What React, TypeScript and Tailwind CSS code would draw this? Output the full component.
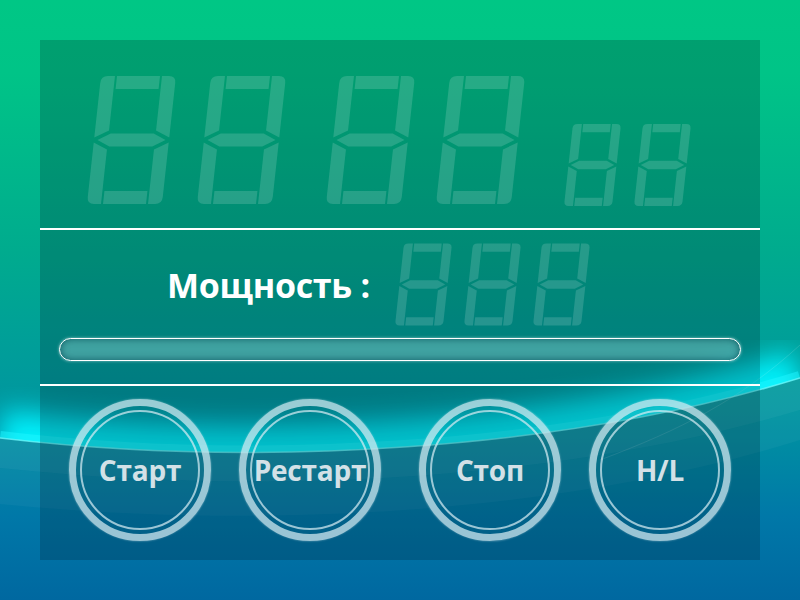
import React from "react";

const SEGMENTS = [
  "M0,7 Q0,0 7,0 L14,0 L14,54.5 L0,61.5 Z",
  "M61,0 L68,0 Q75,0 75,7 L75,61.5 L61,54.5 Z",
  "M0,66.5 L14,73.5 L14,128 L7,128 Q0,128 0,121 Z",
  "M75,66.5 L75,121 Q75,128 68,128 L61,128 L61,73.5 Z",
  "M16,0 L59,0 L59,13 L16,13 Z",
  "M16,115 L59,115 L59,128 L16,128 Z",
  "M3.5,64 L16,57.5 L59,57.5 L71.5,64 L59,70.5 L16,70.5 Z",
];

function Digit({ w, h }: { w: number; h: number }) {
  return (
    <svg width={w} height={h} viewBox="0 0 89 128" className="shrink-0">
      <g transform="translate(14 0) skewX(-6.24)" fill="#ffffff" fillOpacity={0.15}>
        {SEGMENTS.map((d, i) => (
          <path key={i} d={d} />
        ))}
      </g>
    </svg>
  );
}

function Wave() {
  const c1 = "M0,438 C250,468 560,452 800,378";
  return (
    <svg className="absolute inset-0" width={800} height={600} viewBox="0 0 800 600">
      <defs>
        <clipPath id="above">
          <path d={`${c1} L800,0 L0,0 Z`} />
        </clipPath>
        <filter id="blur" x="-20%" y="-50%" width="140%" height="200%">
          <feGaussianBlur stdDeviation="13" />
        </filter>
      </defs>
      <path d={`${c1} L800,410 C560,482 260,496 0,468 Z`} fill="#ffffff" fillOpacity={0.07} />
      <path d="M0,468 C260,496 560,482 800,410 L800,440 C560,515 260,530 0,504 Z" fill="#ffffff" fillOpacity={0.035} />
      <g clipPath="url(#above)">
        <path d={c1} stroke="#00f4ff" strokeWidth={56} fill="none" opacity={0.95} filter="url(#blur)" />
        <path d={c1} stroke="#20f6ff" strokeWidth={14} fill="none" opacity={0.5} />
      </g>
      <path d={c1} stroke="#6ff8fb" strokeWidth={1.5} fill="none" opacity={0.75} />
      <path d="M600,460 C680,430 740,400 800,345" stroke="#ffffff" strokeWidth={1} fill="none" opacity={0.12} />
    </svg>
  );
}

function RoundButton({ label, className }: { label: string; className?: string }) {
  return (
    <div
      className={`relative flex h-[142px] w-[142px] shrink-0 items-center justify-center rounded-full border-[7px] border-[rgba(214,236,242,0.72)] shadow-[0_0_2px_rgba(214,236,242,0.6)] ${className ?? ""}`}
    >
      <div className="absolute inset-[4px] rounded-full border-2 border-[rgba(214,236,242,0.72)]" />
      <span className="relative text-[28px] font-bold leading-none tracking-[-0.2px] text-[#d3e1e7] [font-family:'Open_Sans',sans-serif]">
        {label}
      </span>
    </div>
  );
}

export default function App() {
  return (
    <div className="relative h-[600px] w-[800px] overflow-hidden bg-[linear-gradient(180deg,#00c785_0%,#00c487_12%,#00ab8e_42%,#0096a0_68%,#0078a8_86%,#0068a0_100%)]">
      <Wave />
      <div className="relative p-[40px]">
        <div className="flex h-[520px] w-[720px] flex-col bg-[rgba(0,20,30,0.21)]">
          <div className="flex h-[188px] items-end pb-[24px] pl-[47px]">
            <Digit w={89} h={128} />
            <div className="ml-[21px]">
              <Digit w={89} h={128} />
            </div>
            <div className="ml-[40px]">
              <Digit w={89} h={128} />
            </div>
            <div className="ml-[21px]">
              <Digit w={89} h={128} />
            </div>
            <div className="ml-[39px] mb-[-2px]">
              <Digit w={57} h={82} />
            </div>
            <div className="ml-[13px] mb-[-2px]">
              <Digit w={57} h={82} />
            </div>
          </div>
          <div className="h-[2px] bg-white" />
          <div className="flex h-[154px] flex-col">
            <div className="flex items-center pl-[127px] pt-[13px]">
              <span className="w-[228px] text-[34px] font-bold leading-none tracking-[-0.3px] text-white [font-family:'Open_Sans',sans-serif]">
                Мощность :
              </span>
              <div className="flex gap-[12px]">
                <Digit w={57} h={83} />
                <Digit w={57} h={83} />
                <Digit w={57} h={83} />
              </div>
            </div>
            <div className="ml-[19px] mt-[12px] h-[23px] w-[682px] rounded-full border-[1.5px] border-white bg-[rgba(150,210,210,0.42)] shadow-[inset_0_0_7px_rgba(0,70,80,0.75),0_0_3px_rgba(255,255,255,0.55)]" />
          </div>
          <div className="h-[2px] bg-white" />
          <div className="flex flex-1 pl-[29px] pt-[13px]">
            <RoundButton label="Старт" />
            <RoundButton label="Рестарт" className="ml-[28px]" />
            <RoundButton label="Стоп" className="ml-[38px]" />
            <RoundButton label="H/L" className="ml-[28px]" />
          </div>
        </div>
      </div>
    </div>
  );
}
